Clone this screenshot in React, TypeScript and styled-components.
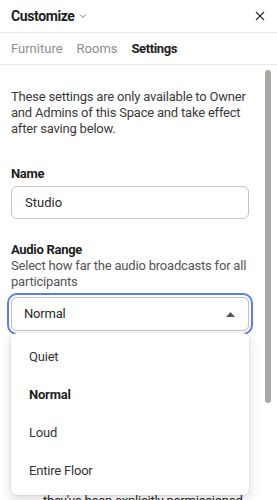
import styled, { createGlobalStyle } from "styled-components";

const GlobalStyle = createGlobalStyle`
  body {
    margin: 0;
    background: #ffffff;
    font-family: Roboto, "Liberation Sans", Arial, sans-serif;
    color: #3b3b3b;
  }
`;

type Option = {
  label: string;
  selected?: boolean;
};

const audioRanges: Option[] = [
  { label: "Quiet" },
  { label: "Normal", selected: true },
  { label: "Loud" },
  { label: "Entire Floor" },
];

const tabs = ["Furniture", "Rooms", "Settings"];
const activeTab = "Settings";

const App = () => {
  return (
    <>
      <GlobalStyle />
      <SPanel>
        <SHeader>
          <STitle>
            Customize
            <svg width="8" height="6" viewBox="0 0 8 6" fill="none">
              <path d="M1 1.5L4 4.5L7 1.5" stroke="#7a7a7a" strokeWidth="1" />
            </svg>
          </STitle>
          <SClose aria-label="Close">
            <svg width="10" height="10" viewBox="0 0 10 10" fill="none">
              <path d="M1 1L9 9M9 1L1 9" stroke="#2a2a2a" strokeWidth="1.1" />
            </svg>
          </SClose>
        </SHeader>

        <STabs>
          {tabs.map((tab) => (
            <STab key={tab} $active={tab === activeTab}>
              {tab}
            </STab>
          ))}
        </STabs>

        <SBody>
          <SContent>
            <SIntro>
              These settings are only available to Owner and Admins of this
              Space and take effect after saving below.
            </SIntro>

            <SLabel>Name</SLabel>
            <SInput defaultValue="Studio" />

            <SSection>
              <SLabel>Audio Range</SLabel>
              <SHint>
                Select how far the audio broadcasts for all participants
              </SHint>
              <SSelectWrap>
                <SSelect>
                  <span>Normal</span>
                  <svg width="9" height="5" viewBox="0 0 9 5">
                    <path d="M0 5L4.5 0L9 5Z" fill="#555555" />
                  </svg>
                </SSelect>
                <SMenu>
                  {audioRanges.map((item) => (
                    <SMenuItem key={item.label} $selected={item.selected}>
                      {item.label}
                    </SMenuItem>
                  ))}
                </SMenu>
              </SSelectWrap>
            </SSection>

            <SSection>
              <SLabel>Space Access</SLabel>
              <SHint>Choose who is able to enter this Space and all of its rooms</SHint>
              <SRadioList>
                <SRadioRow>
                  <SRadio />
                  <span>Anyone with the link</span>
                </SRadioRow>
                <SRadioRow>
                  <SRadio />
                  <span>Members of the workspace</span>
                </SRadioRow>
                <SRadioRow>
                  <SRadio />
                  <span>
                    Invited guests only, once
                    <br />
                    they've been explicitly permissioned
                  </span>
                </SRadioRow>
              </SRadioList>
            </SSection>
          </SContent>
          <SGutter>
            <SThumb />
          </SGutter>
        </SBody>
      </SPanel>
    </>
  );
};

export default App;

const SPanel = styled.div`
  width: 277px;
  height: 500px;
  display: flex;
  flex-direction: column;
  overflow: hidden;
  background: #ffffff;
`;

const SHeader = styled.div`
  height: 32px;
  flex-shrink: 0;
  display: flex;
  align-items: center;
  justify-content: space-between;
  padding: 0 11px;
  border-bottom: 1px solid #ececec;
`;

const STitle = styled.div`
  display: flex;
  align-items: center;
  gap: 5px;
  font-size: 14px;
  font-weight: 700;
  letter-spacing: -0.4px;
  color: #1e1e1e;
`;

const SClose = styled.button`
  border: none;
  background: none;
  padding: 0;
  width: 10px;
  height: 10px;
  display: flex;
  margin-right: 1px;
`;

const STabs = styled.div`
  height: 31px;
  flex-shrink: 0;
  display: flex;
  align-items: center;
  gap: 14px;
  padding: 0 11px;
  border-bottom: 1px solid #ececec;
`;

const STab = styled.span<{ $active?: boolean }>`
  font-size: 13px;
  font-weight: ${(p) => (p.$active ? 700 : 400)};
  letter-spacing: ${(p) => (p.$active ? "-0.4px" : "0")};
  color: ${(p) => (p.$active ? "#1e1e1e" : "#8d8d8d")};
`;

const SBody = styled.div`
  flex: 1;
  display: flex;
  overflow: hidden;
`;

const SContent = styled.div`
  width: 238px;
  flex-shrink: 0;
  padding: 24px 11px 0;
  font-size: 13px;
  line-height: 16px;
  letter-spacing: -0.2px;
`;

const SIntro = styled.p`
  margin: 0 0 29px;
  color: #3b3b3b;
`;

const SLabel = styled.div`
  font-weight: 700;
  letter-spacing: -0.3px;
  color: #1e1e1e;
  margin-bottom: 4px;
`;

const SInput = styled.input`
  box-sizing: border-box;
  width: 100%;
  height: 33px;
  padding: 0 13px;
  border: 1px solid #c4c4c4;
  border-radius: 6px;
  font: inherit;
  font-size: 13px;
  color: #2a2a2a;
  outline: none;
`;

const SSection = styled.div`
  margin-top: 23px;

  & > ${SLabel} {
    margin-bottom: 0;
  }
`;

const SHint = styled.div`
  color: #555555;
`;

const SSelectWrap = styled.div`
  position: relative;
  margin-top: 7px;
`;

const SSelect = styled.div`
  box-sizing: border-box;
  height: 34px;
  display: flex;
  align-items: center;
  justify-content: space-between;
  padding: 0 13px 0 12px;
  border: 1px solid #c4c4c4;
  border-radius: 6px;
  color: #2a2a2a;
  box-shadow: 0 0 0 2px #ffffff, 0 0 0 4px #5a7fe8;
`;

const SMenu = styled.div`
  position: absolute;
  top: 36px;
  left: 0;
  right: 0;
  z-index: 2;
  padding: 5px 0;
  background: #ffffff;
  border-radius: 6px;
  box-shadow: 0 4px 12px rgba(0, 0, 0, 0.16), 0 0 0 1px rgba(0, 0, 0, 0.04);
`;

const SMenuItem = styled.div<{ $selected?: boolean }>`
  height: 38px;
  display: flex;
  align-items: center;
  padding-left: 18px;
  font-weight: ${(p) => (p.$selected ? 700 : 400)};
  color: ${(p) => (p.$selected ? "#1e1e1e" : "#333333")};
`;

const SRadioList = styled.div`
  display: flex;
  flex-direction: column;
  gap: 16px;
  margin-top: 11px;
`;

const SRadioRow = styled.div`
  display: flex;
  align-items: flex-start;
  gap: 16px;
  color: #2a2a2a;
`;

const SRadio = styled.span`
  flex-shrink: 0;
  box-sizing: border-box;
  width: 16px;
  height: 16px;
  border: 1px solid #c4c4c4;
  border-radius: 50%;
`;

const SGutter = styled.div`
  width: 17px;
  padding: 5px 0 0 5px;
`;

const SThumb = styled.div`
  width: 6px;
  height: 333px;
  border-radius: 3px;
  background: #a9a9a4;
`;
